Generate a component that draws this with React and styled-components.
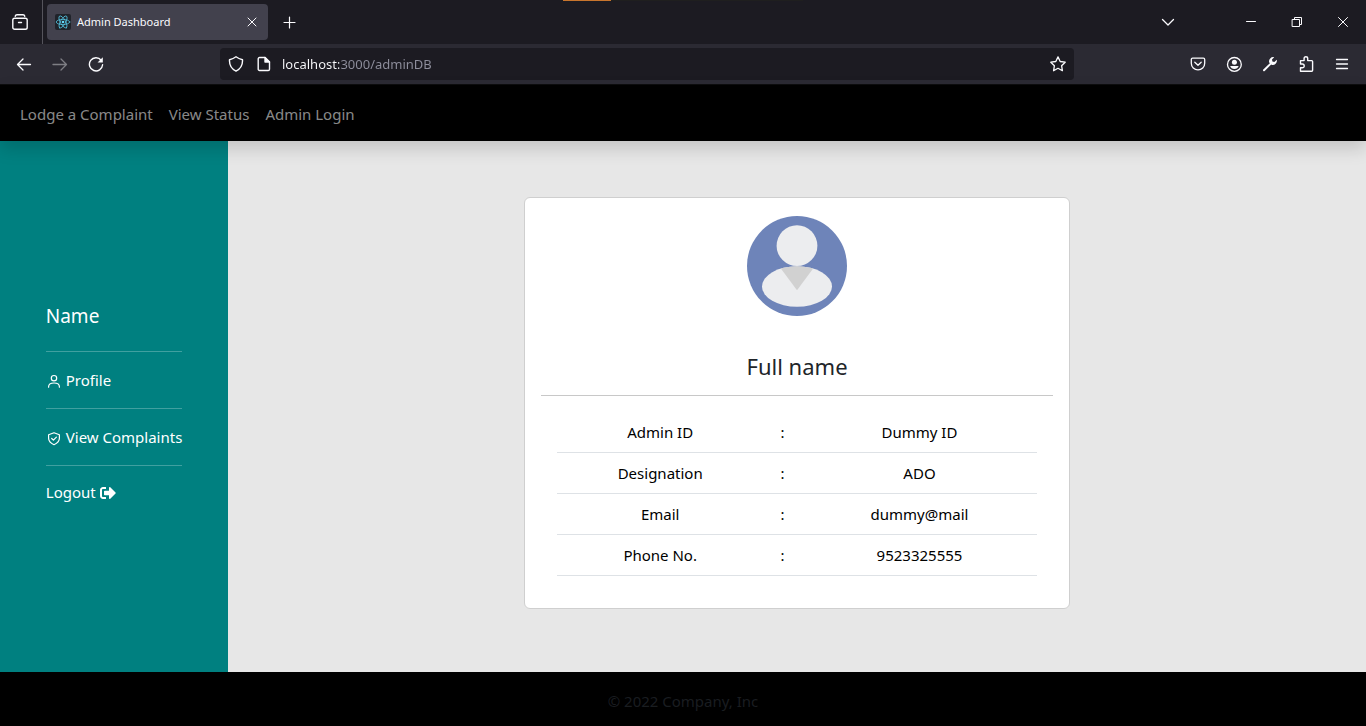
import React from "react";
import styled, { createGlobalStyle } from "styled-components";
import { FaSignOutAlt } from "react-icons/fa";

const GlobalStyle = createGlobalStyle`
  *, *::before, *::after { box-sizing: border-box; }
  body {
    margin: 0;
    background: #000;
    font-family: "Noto Sans", "Open Sans", sans-serif;
    font-size: 15px;
    line-height: 24px;
  }
  button, input { font: inherit; }
`;

const Page = styled.div`
  display: flex;
  flex-direction: column;
  min-height: 100vh;
`;

/* ---------- browser chrome ---------- */

const TabStrip = styled.header`
  position: relative;
  display: flex;
  align-items: center;
  height: 44px;
  background: #1c1b22;
  color: #fbfbfe;
`;

const LoadTrack = styled.div`
  position: absolute;
  top: 0;
  left: 563px;
  width: 240px;
  height: 1px;
  background: linear-gradient(90deg, #c8752d 20%, #1f1f1f 20%);
`;

const ChromeButton = styled.button`
  display: flex;
  align-items: center;
  justify-content: center;
  width: ${(p) => p.$width || 36}px;
  height: 36px;
  padding: 0;
  border: 0;
  border-radius: 4px;
  background: transparent;
  color: #fbfbfe;
  opacity: ${(p) => (p.disabled ? 0.4 : 1)};
`;

const StripDivider = styled.div`
  width: 1px;
  height: 44px;
  margin: 0 4px 0 2px;
  background: #55545c;
`;

const Tab = styled.div`
  display: flex;
  align-items: center;
  gap: 6px;
  width: 221px;
  height: 36px;
  padding: 0 4px 0 8px;
  border-radius: 4px;
  background: #42414d;
  font-size: 11px;
`;

const TabTitle = styled.span`
  flex: 1;
  white-space: nowrap;
`;

const WindowControls = styled.div`
  display: flex;
  margin-left: auto;
`;

const ListTabs = styled.div`
  margin-right: 42px;
`;

const Toolbar = styled.div`
  display: flex;
  align-items: center;
  gap: 106px;
  height: 40px;
  padding: 0 6px;
  background: #2b2a33;
`;

const ToolGroup = styled.div`
  display: flex;
`;

const AddressBar = styled.label`
  display: flex;
  flex: 1;
  align-items: center;
  gap: 12px;
  height: 32px;
  padding: 0 8px;
  border-radius: 4px;
  background: #1c1b22;
  color: #fbfbfe;
`;

const AddressInput = styled.input`
  flex: 1;
  min-width: 0;
  height: 24px;
  margin-left: -2px;
  padding: 0;
  border: 0;
  outline: 0;
  font-size: 13px;
  color: transparent;
  background: linear-gradient(90deg, #fbfbfe 57px, #8f8f9d 57px);
  background-clip: text;
  -webkit-background-clip: text;
`;

const Svg = styled.svg`
  flex: none;
  display: block;
  fill: none;
  stroke: currentColor;
  stroke-linecap: round;
  stroke-linejoin: round;
`;

function Icon({ size = 16, weight = 1.3, className, children }) {
  return (
    <Svg className={className} width={size} height={size} viewBox="0 0 16 16" strokeWidth={weight} aria-hidden="true">
      {children}
    </Svg>
  );
}

/* ---------- site ---------- */

const Nav = styled.nav`
  position: relative;
  z-index: 1;
  display: flex;
  align-items: center;
  gap: 16px;
  height: 57px;
  padding: 2px 20px 0;
  border-top: 1px solid #0c0c0d;
  background: #000;
  box-shadow: 0 8px 16px rgba(0, 0, 0, 0.15);
`;

const NavLink = styled.a`
  color: rgba(255, 255, 255, 0.55);
  text-decoration: none;
`;

const Main = styled.div`
  display: flex;
  flex: 1;
  background: #e7e7e7;
`;

const Sidebar = styled.aside`
  display: flex;
  flex-direction: column;
  align-items: center;
  justify-content: center;
  width: 16.7%;
  padding-bottom: 6px;
  background: #008080;
  color: #fff;
`;

const SideMenu = styled.ul`
  margin: 0;
  padding: 0;
  list-style: none;
`;

const SideItem = styled.li`
  padding: 16px 0;
  border-top: 1px solid rgba(255, 255, 255, 0.25);
  &:last-child { padding: 14px 0 0; }
`;

const SideName = styled.h5`
  margin: 0 0 23px;
  font-size: 19px;
  font-weight: 400;
  line-height: 24px;
`;

const SideLink = styled.a`
  display: flex;
  align-items: center;
  gap: 4px;
  color: #fff;
  text-decoration: none;
  svg { margin-top: 2px; }
`;

const Content = styled.main`
  flex: 1;
  padding: 56px 0 63px;
`;

const Card = styled.section`
  display: flex;
  flex-direction: column;
  width: 48%;
  margin: 0 auto;
  padding: 18px 16px 32px;
  border: 1px solid #cfcfcf;
  border-radius: 6px;
  background: #fff;
  text-align: center;
`;

const Avatar = styled.svg`
  display: block;
  align-self: center;
  width: 100px;
  height: 100px;
`;

const FullName = styled.h4`
  margin: 34px 0 0;
  padding-bottom: 13px;
  border-bottom: 1px solid #c8c8c8;
  color: #212529;
  font-size: 22px;
  font-weight: 400;
  line-height: 32px;
`;

const Details = styled.table`
  margin: 16px 16px 0;
  border-collapse: collapse;
  table-layout: fixed;
  color: #000;
`;

const Cell = styled.td`
  width: ${(p) => p.$width};
  padding: 8px;
  border-bottom: 1px solid #dee2e6;
`;

const Footer = styled.footer`
  padding: 17px 0 13px;
  background: #000;
  color: #1a1d20;
  text-align: center;
`;

const details = [
  ["Admin ID", "Dummy ID"],
  ["Designation", "ADO"],
  ["Email", "dummy@mail"],
  ["Phone No.", "9523325555"],
];

function Favicon() {
  return (
    <Svg width="16" height="16" viewBox="0 0 16 16" aria-hidden="true">
      <rect width="16" height="16" rx="2" fill="#20232a" stroke="none" />
      <g stroke="#53c1de" strokeWidth="0.8">
        <ellipse cx="8" cy="8" rx="6.8" ry="2.6" />
        <ellipse cx="8" cy="8" rx="6.8" ry="2.6" transform="rotate(60 8 8)" />
        <ellipse cx="8" cy="8" rx="6.8" ry="2.6" transform="rotate(120 8 8)" />
      </g>
      <circle cx="8" cy="8" r="1.3" fill="#61dafb" stroke="none" />
    </Svg>
  );
}

function BrowserChrome() {
  return (
    <>
      <TabStrip>
        <LoadTrack />
        <ChromeButton $width={40} aria-label="Recent browsing">
          <Icon weight={1.4}>
            <path d="M3.2 2.3Q3.6 .8 5 .8h6Q12.4 .8 12.8 2.3" />
            <rect x=".8" y="4.3" width="14.4" height="10.9" rx="1.8" />
            <path d="M6.5 8.5h3" />
          </Icon>
        </ChromeButton>
        <StripDivider />
        <Tab>
          <Favicon />
          <TabTitle>Admin Dashboard</TabTitle>
          <ChromeButton $width={24} aria-label="Close tab">
            <Icon weight={1}><path d="M4 4l8 8M12 4l-8 8" /></Icon>
          </ChromeButton>
        </Tab>
        <ChromeButton $width={44} aria-label="New tab">
          <Icon weight={1.2}><path d="M7.5 3v11M2 8.500h11" /></Icon>
        </ChromeButton>
        <WindowControls>
          <ListTabs>
            <ChromeButton aria-label="List all tabs">
              <Icon><path d="M2.500 5.500L8 11l5.500-5.500" /></Icon>
            </ChromeButton>
          </ListTabs>
          <ChromeButton $width={46} aria-label="Minimize">
            <Icon weight={1}><path d="M3.500 7.500h9" /></Icon>
          </ChromeButton>
          <ChromeButton $width={46} aria-label="Restore">
            <Icon weight={1}><path d="M3.500 5.500h7v7h-7zM5.500 5.500v-2h7v7h-2" strokeLinejoin="miter" /></Icon>
          </ChromeButton>
          <ChromeButton $width={46} aria-label="Close">
            <Icon weight={1}><path d="M3.500 3.500l9 9M12.500 3.500l-9 9" /></Icon>
          </ChromeButton>
        </WindowControls>
      </TabStrip>
      <Toolbar>
        <ToolGroup>
          <ChromeButton aria-label="Back">
            <Icon><path d="M14.500 8.500H1.500M7 3L1.500 8.500 7 14" /></Icon>
          </ChromeButton>
          <ChromeButton aria-label="Forward" disabled>
            <Icon><path d="M1 8.500h13.500M9 3l5.500 5.500L9 14" /></Icon>
          </ChromeButton>
          <ChromeButton aria-label="Reload">
            <Icon weight={1.4}>
              <path d="M13.200 4.200A6.600 6.600 0 1 0 14.600 8.800" />
              <path d="M14.800 1.300v5.200H9.600z" fill="currentColor" stroke="none" />
            </Icon>
          </ChromeButton>
        </ToolGroup>
        <AddressBar>
          <Icon weight={1.4}>
            <path d="M8 .8C6 2.300 3.800 3.200 1.500 3.800c-.3 5 1.700 9 6.500 11.300 4.800-2.300 6.800-6.300 6.500-11.300C12.200 3.200 10 2.300 8 .8z" />
          </Icon>
          <Icon weight={1.4}>
            <path d="M3.500 1.500h5.500l4.500 4.500v7.200a1.300 1.300 0 0 1-1.300 1.300H3.500a1.300 1.300 0 0 1-1.300-1.300V2.800a1.300 1.300 0 0 1 1.300-1.300z" />
            <path d="M9 1.500v4.500h4.500z" fill="currentColor" />
          </Icon>
          <AddressInput aria-label="Address" defaultValue="localhost:3000/adminDB" />
          <Icon weight={1.3}>
            <path d="M8 .9l2.200 4.600 5 .7-3.600 3.500.8 5L8 12.300l-4.400 2.400.8-5L.8 6.200l5-.7z" />
          </Icon>
        </AddressBar>
        <ToolGroup>
          <ChromeButton aria-label="Save to Pocket">
            <Icon>
              <path d="M2.600 2.200h10.800a1.300 1.300 0 0 1 1.300 1.300v3.700a6.700 6.700 0 0 1-13.400 0V3.500a1.300 1.300 0 0 1 1.300-1.300z" />
              <path d="M4.800 6.200L8 9.200l3.200-3" />
            </Icon>
          </ChromeButton>
          <ChromeButton aria-label="Account">
            <Icon>
              <circle cx="8.4" cy="8.400" r="6.900" />
              <circle cx="8.4" cy="6.300" r="2.500" fill="currentColor" stroke="none" />
              <path d="M4.200 9.900h8.400c-.5 1.900-2.100 3-4.200 3s-3.700-1.100-4.200-3z" fill="currentColor" stroke="none" />
            </Icon>
          </ChromeButton>
          <ChromeButton aria-label="Developer tools">
            <Icon>
              <path d="M2 14.300L9 7.400" strokeWidth="2" />
              <path d="M12.200 1.200a4.200 4.200 0 0 0-5 5.200L9.600 8.800a4.200 4.200 0 0 0 5.200-5L12.300 6 10.400 5.600 10 3.600z" fill="currentColor" stroke="none" />
            </Icon>
          </ChromeButton>
          <ChromeButton aria-label="Extensions">
            <Icon weight={1.4}>
              <path d="M2.500 15.200V11.800h1.800a1.900 1.900 0 0 0 0-3.800H2.500V4.600h3.600V2.500a1.800 1.800 0 0 1 3.600 0v2.100h4a.9.9 0 0 1 .9.9v8.800a.9.9 0 0 1-.9.900z" />
            </Icon>
          </ChromeButton>
          <ChromeButton aria-label="Menu">
            <Icon weight={1.3}><path d="M2.500 3.500h11M2.500 8h11M2.500 12.500h11" /></Icon>
          </ChromeButton>
        </ToolGroup>
      </Toolbar>
    </>
  );
}

function ProfileAvatar() {
  return (
    <Avatar viewBox="0 0 100 100" role="img" aria-label="Profile picture">
      <defs>
        <clipPath id="shoulders">
          <ellipse cx="50" cy="70.5" rx="35" ry="20.3" />
        </clipPath>
      </defs>
      <circle cx="50" cy="50" r="50" fill="#6e84b9" />
      <ellipse cx="50" cy="70.5" rx="35" ry="20.3" fill="#ecedef" />
      <path d="M30.5 48h39L50 74.3z" fill="#d1d1d1" clipPath="url(#shoulders)" />
      <circle cx="50" cy="29.7" r="20.4" fill="#ecedef" />
    </Avatar>
  );
}

export default function App() {
  return (
    <Page>
      <GlobalStyle />
      <BrowserChrome />
      <Nav>
        <NavLink href="#lodge">Lodge a Complaint</NavLink>
        <NavLink href="#status">View Status</NavLink>
        <NavLink href="#login">Admin Login</NavLink>
      </Nav>
      <Main>
        <Sidebar>
          <div>
            <SideName>Name</SideName>
            <SideMenu>
              <SideItem>
                <SideLink href="#profile">
                  <Icon weight={1.2}>
                    <circle cx="8" cy="5.2" r="2.7" />
                    <path d="M2.600 14.200v-.4c0-2.500 2.200-3.800 5.400-3.800s5.400 1.300 5.400 3.800v.4" />
                  </Icon>
                  Profile
                </SideLink>
              </SideItem>
              <SideItem>
                <SideLink href="#complaints">
                  <Icon weight={1.2}>
                    <path d="M8 2.800l5.400 1.900v3.600c0 2.900-2.200 5-5.400 6.400-3.200-1.400-5.400-3.500-5.400-6.400V4.700z" />
                    <path d="M5.700 8.500l1.700 1.700 3-3.100" />
                  </Icon>
                  View Complaints
                </SideLink>
              </SideItem>
              <SideItem>
                <SideLink href="#logout">Logout<FaSignOutAlt size={16} /></SideLink>
              </SideItem>
            </SideMenu>
          </div>
        </Sidebar>
        <Content>
          <Card>
            <ProfileAvatar />
            <FullName>Full name</FullName>
            <Details>
              <tbody>
                {details.map(([label, value]) => (
                  <tr key={label}>
                    <Cell $width="43%">{label}</Cell>
                    <Cell $width="8%">:</Cell>
                    <Cell $width="49%">{value}</Cell>
                  </tr>
                ))}
              </tbody>
            </Details>
          </Card>
        </Content>
      </Main>
      <Footer>© 2022 Company, Inc</Footer>
    </Page>
  );
}
